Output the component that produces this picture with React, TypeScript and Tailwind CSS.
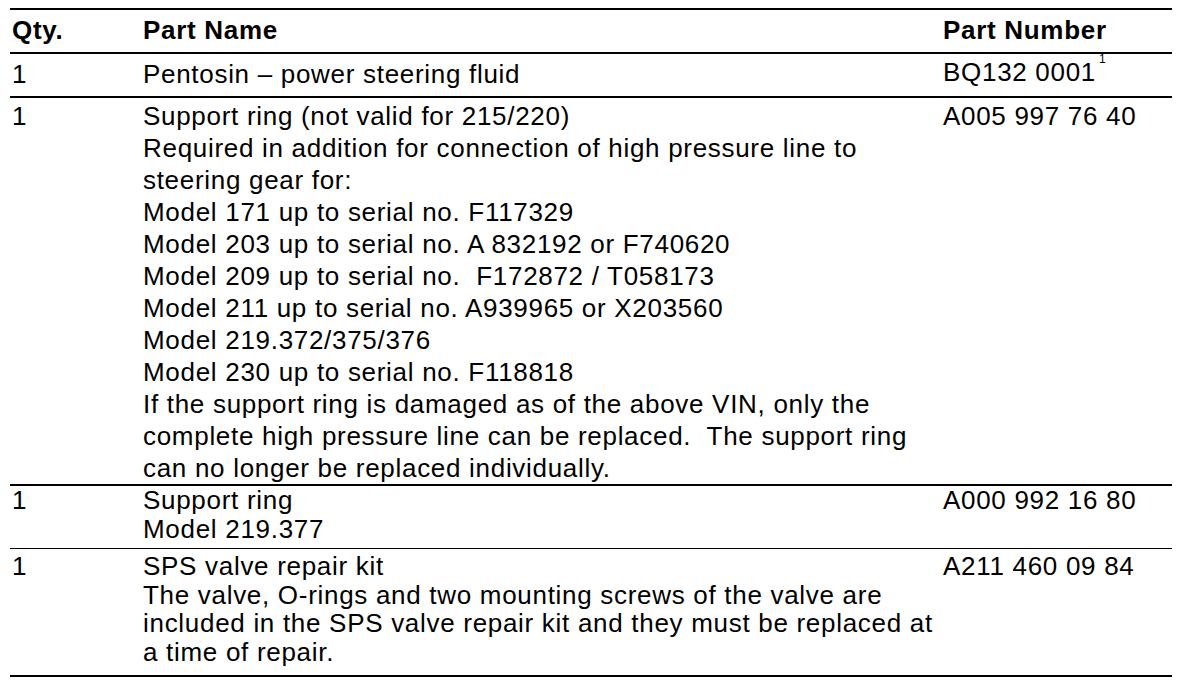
import React from "react";

const grid = "grid grid-cols-[131px_800px_1fr]";
const cell = "pl-[2px] whitespace-nowrap";

export default function App() {
  return (
    <div
      className="w-[1184px] h-[694px] bg-white pl-[10px] pt-[8px] text-black"
      style={{ fontFamily: '"Liberation Sans", Arial, sans-serif' }}
    >
      <div className="w-[1162px] border-t-2 border-black text-[26px] tracking-[0.7px]">
        <div className={`${grid} h-[44px] items-center border-b-2 border-black font-bold leading-[31.5px]`}>
          <div className={cell}>Qty.</div>
          <div className={cell}>Part Name</div>
          <div className={cell}>Part Number</div>
        </div>
        <div className={`${grid} h-[44px] items-center border-b-2 border-black leading-[31.5px]`}>
          <div className={cell}>1</div>
          <div className={cell}>Pentosin – power steering fluid</div>
          <div className={cell}>
            BQ132 0001
            <span className="relative top-[-18px] ml-[3px] text-[12px] tracking-normal">1</span>
          </div>
        </div>
        <div className={`${grid} h-[388px] border-b-2 border-black leading-[32px] pt-[2px]`}>
          <div className={cell}>1</div>
          <div className={cell}>
            Support ring (not valid for 215/220)<br />
            Required in addition for connection of high pressure line to<br />
            steering gear for:<br />
            Model 171 up to serial no. F117329<br />
            Model 203 up to serial no. A 832192 or F740620<br />
            Model 209 up to serial no.&nbsp; F172872 / T058173<br />
            Model 211 up to serial no. A939965 or X203560<br />
            Model 219.372/375/376<br />
            Model 230 up to serial no. F118818<br />
            If the support ring is damaged as of the above VIN, only the<br />
            complete high pressure line can be replaced.&nbsp; The support ring<br />
            can no longer be replaced individually.
          </div>
          <div className={cell}>A005 997 76 40</div>
        </div>
        <div className={`${grid} h-[63px] border-b border-black leading-[28.5px] pt-0`}>
          <div className={cell}>1</div>
          <div className={cell}>
            Support ring<br />
            Model 219.377
          </div>
          <div className={cell}>A000 992 16 80</div>
        </div>
        <div className={`${grid} h-[128px] border-b-2 border-black leading-[28.5px] pt-[3px]`}>
          <div className={cell}>1</div>
          <div className={cell}>
            SPS valve repair kit<br />
            The valve, O-rings and two mounting screws of the valve are<br />
            included in the SPS valve repair kit and they must be replaced at<br />
            a time of repair.
          </div>
          <div className={cell}>A211 460 09 84</div>
        </div>
      </div>
    </div>
  );
}
